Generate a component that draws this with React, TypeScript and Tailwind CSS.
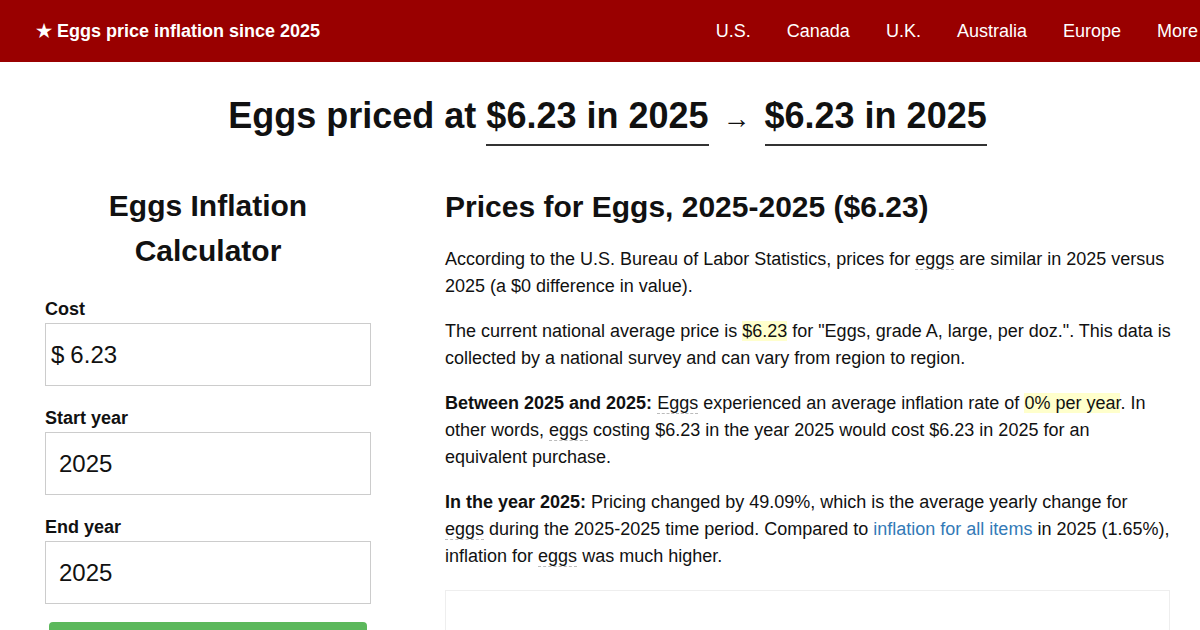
import React from 'react';

const Abbr: React.FC<{ children: React.ReactNode }> = ({ children }) => (
  <span className="border-b border-dashed border-[#bbb]">{children}</span>
);

const Mark: React.FC<{ children: React.ReactNode }> = ({ children }) => (
  <span className="bg-[#ffffcc]">{children}</span>
);

const nav = ['U.S.', 'Canada', 'U.K.', 'Australia', 'Europe', 'More'];

export default function App() {
  return (
    <div className="w-[1200px] h-[630px] overflow-hidden bg-white text-[#111] font-['Liberation_Sans',Arial,sans-serif]">
      <header className="h-[62px] bg-[#990000] flex items-center justify-between pl-[36px] pr-[2px] text-white">
        <div className="text-[18px] font-bold">★ Eggs price inflation since 2025</div>
        <nav className="flex gap-[36px] text-[18px] whitespace-nowrap">
          {nav.map((n) => (
            <span key={n}>{n}</span>
          ))}
        </nav>
      </header>

      <h1 className="mt-[30px] pl-[15px] text-center text-[36px] font-bold leading-[48px]">
        Eggs priced at{' '}
        <span className="inline-block border-b-2 border-[#333] pb-[4px]">$6.23 in 2025</span>
        <span className="text-[28px] mx-[14px]">→</span>
        <span className="inline-block border-b-2 border-[#333] pb-[4px]">$6.23 in 2025</span>
      </h1>

      <div className="flex gap-[74px] pl-[45px] mt-[30px]">
        <div className="w-[326px] shrink-0">
          <h2 className="text-center text-[30px] font-bold leading-[45px] mt-[7px]">
            Eggs Inflation
            <br />
            Calculator
          </h2>
          <div className="mt-[24px] flex flex-col">
            <label className="text-[18px] font-bold leading-[24px]">Cost</label>
            <div className="mt-[2px] h-[63px] border border-[#ccc] flex items-center px-[5px] text-[24px]">
              <span>$</span>
              <span className="ml-[6px]">6.23</span>
            </div>
            <label className="mt-[20px] text-[18px] font-bold leading-[24px]">Start year</label>
            <div className="mt-[2px] h-[63px] border border-[#ccc] flex items-center px-[13px] text-[24px]">
              2025
            </div>
            <label className="mt-[20px] text-[18px] font-bold leading-[24px]">End year</label>
            <div className="mt-[2px] h-[63px] border border-[#ccc] flex items-center px-[13px] text-[24px]">
              2025
            </div>
            <div className="mt-[18px] mx-[4px] h-[40px] rounded-[4px] bg-[#5cb85c]" />
          </div>
        </div>

        <div className="w-[726px] text-[18px] leading-[27px]">
          <h2 className="text-[30px] font-bold leading-[36px] mt-[13px]">Prices for Eggs, 2025-2025 ($6.23)</h2>
          <p className="mt-[21px]">
            According to the U.S. Bureau of Labor Statistics, prices for <Abbr>eggs</Abbr> are similar in 2025 versus
            2025 (a $0 difference in value).
          </p>
          <p className="mt-[18px]">
            The current national average price is <Mark>$6.23</Mark> for "Eggs, grade A, large, per doz.". This data is
            collected by a national survey and can vary from region to region.
          </p>
          <p className="mt-[18px]">
            <b>Between 2025 and 2025:</b> <Abbr>Eggs</Abbr> experienced an average inflation rate of{' '}
            <Mark>0% per year</Mark>. In other words, <Abbr>eggs</Abbr> costing $6.23 in the year 2025 would cost $6.23
            in 2025 for an equivalent purchase.
          </p>
          <p className="mt-[18px]">
            <b>In the year 2025:</b> Pricing changed by 49.09%, which is the average yearly change for{' '}
            <Abbr>eggs</Abbr> during the 2025-2025 time period. Compared to{' '}
            <span className="text-[#337ab7]">inflation for all items</span> in 2025 (1.65%), inflation for{' '}
            <Abbr>eggs</Abbr> was much higher.
          </p>
          <div className="mt-[20px] mr-[1px] h-[80px] border border-[#eee]" />
        </div>
      </div>
    </div>
  );
}
